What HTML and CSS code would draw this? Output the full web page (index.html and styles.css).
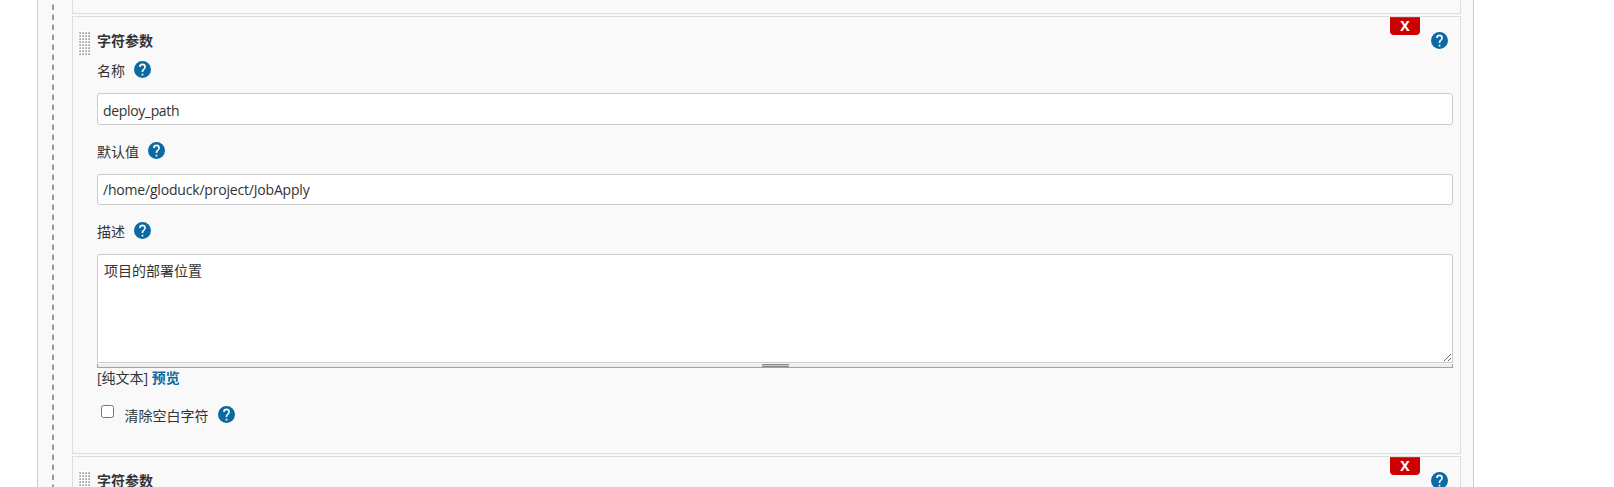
FILE: index.html
```
<!DOCTYPE html>
<html lang="zh-CN">
<head>
<meta charset="utf-8">
<title>字符参数</title>
<link rel="stylesheet" href="styles.css">
</head>
<body>
<svg width="0" height="0" class="defs"><symbol id="help" viewBox="2 2 20 20"><path fill="#0b6aa2" d="M12 2a10 10 0 1 0 0 20 10 10 0 0 0 0-20zm1 17h-2v-2h2v2zm2.07-7.75-.9.92C13.45 12.9 13 13.5 13 15h-2v-.5c0-1.1.45-2.1 1.17-2.83l1.24-1.26c.37-.36.59-.86.59-1.41a2 2 0 0 0-4 0H8a4 4 0 0 1 8 0c0 .88-.36 1.68-.93 2.25z"/></symbol></svg>
<main class="panel">
  <div class="dashes"></div>
  <div class="list">
    <section class="card previous"></section>
    <section class="card">
      <div class="handle"></div>
      <div class="body">
        <header class="title"><b>字符参数</b><button class="remove">X</button><svg class="help"><use href="#help"/></svg></header>
        <div class="label name">名称<svg class="help"><use href="#help"/></svg></div>
        <input class="field first" type="text" value="deploy_path">
        <div class="label">默认值<svg class="help"><use href="#help"/></svg></div>
        <input class="field path" type="text" value="/home/gloduck/project/JobApply">
        <div class="label">描述<svg class="help"><use href="#help"/></svg></div>
        <textarea class="area">项目的部署位置</textarea>
        <div class="grip"><i></i></div>
        <div class="preview">[纯文本] <a>预览</a></div>
        <div class="check"><input type="checkbox"><span>清除空白字符</span><svg class="help"><use href="#help"/></svg></div>
      </div>
    </section>
    <section class="card">
      <div class="handle"></div>
      <div class="body">
        <header class="title"><b>字符参数</b><button class="remove">X</button><svg class="help"><use href="#help"/></svg></header>
      </div>
    </section>
  </div>
</main>
</body>
</html>
```
FILE: styles.css
```
* { box-sizing: border-box; }
html, body { height: 100%; }
body {
  margin: 0;
  overflow: hidden;
  background: #fff;
  color: #333;
  font: 14px/20px "Open Sans", "Noto Sans CJK SC", sans-serif;
}
.defs { display: block; }
.panel {
  display: flex;
  width: 1437px;
  height: 487px;
  margin-left: 37px;
  overflow: hidden;
  background: #f9f9f9;
  border: solid #ccc;
  border-width: 0 1px;
}
.dashes {
  width: 2px;
  margin-left: 14px;
  background: repeating-linear-gradient(to bottom, #f9f9f9 0 4px, #d0d0d0 4px 5px, #999 5px 10px);
}
.list { width: 1389px; margin-left: 18px; }
.card {
  display: flex;
  height: 438px;
  margin-bottom: 2px;
  border: 1px solid #ddd;
  background: #f9f9f9;
}
.previous { height: 14px; border-top: 0; }
.handle {
  width: 12px;
  height: 24px;
  margin: 14px 7px 0 5px;
  background:
    linear-gradient(to right, #fff 1px, transparent 1px) 0 0 / 3px 3px,
    linear-gradient(to bottom, #fff 1px, transparent 1px) 0 0 / 3px 3px,
    linear-gradient(135deg, #ddd 40%, #aaa 75%) 0 0 / 3px 3px;
}
.body { width: 1356px; }
.title { display: flex; height: 41px; color: #333; }
.title b { flex: 1; padding-top: 14px; }
.remove {
  width: 30px;
  height: 18px;
  padding: 0;
  border: 1px solid #c00;
  border-top-color: #b33;
  border-radius: 0 0 4px 4px;
  background: #c00;
  color: #fff;
  font: bold 14px/16px "Open Sans", sans-serif;
}
.title .help { margin: 14.5px 5.5px 0 10.5px; }
.help { width: 17px; height: 17px; flex: none; }
.label { display: flex; height: 49px; padding-top: 17px; }
.label .help { margin: 0 0 0 9.4px; }
.label.name { height: 35px; padding-top: 3px; }
.field {
  display: block;
  width: 100%;
  height: 31px;
  padding: 0 5px;
  border: 1px solid #ccc;
  border-radius: 3px;
  background: #fff;
  color: #333;
  font: inherit;
  letter-spacing: -.35px;
}
.first { height: 32px; padding-top: 2px; }
.path { letter-spacing: -.19px; }
.area {
  display: block;
  width: 100%;
  height: 109px;
  padding: 6px;
  border: 1px solid #ccc;
  border-radius: 3px 3px 0 0;
  background: #fff;
  color: #333;
  font: inherit;
  resize: vertical;
}
.grip {
  height: 4px;
  border: 1px solid #9aa5ab;
  border-top: 0;
  background: #eaeff2;
}
.grip i {
  display: block;
  width: 27px;
  height: 3px;
  margin: 1px auto 0;
  border: solid #888;
  border-width: 1px 0;
  background: #ccc;
}
.preview { height: 31px; }
.preview a { color: #0b6aa2; font-weight: bold; }
.check { display: flex; padding-top: 5px; }
.check input { width: 13px; height: 13px; margin: 1px 10.5px 0 4px; }
.check .help { margin: 2px 0 0 9px; }
.check span { padding-top: 2px; }
```
